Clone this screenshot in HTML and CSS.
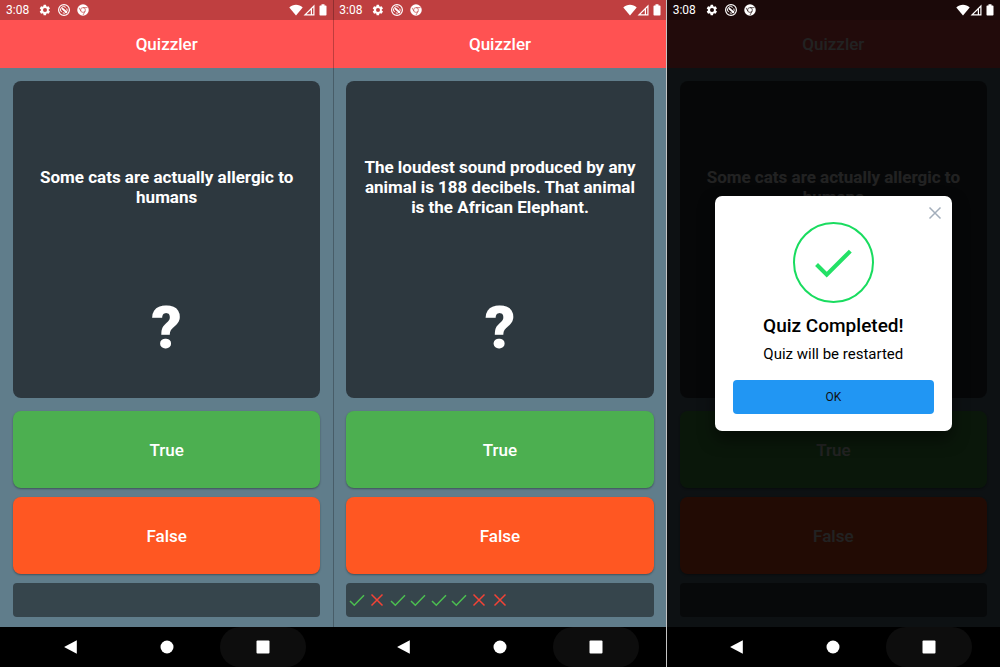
FILE: index.html
```html
<!DOCTYPE html>
<html lang="en">
<head>
<meta charset="utf-8">
<meta name="viewport" content="width=device-width, initial-scale=1">
<title>Quizzler</title>
<link rel="stylesheet" href="styles.css">
</head>
<body>
<svg class="sprite" aria-hidden="true">
  <symbol id="gear" viewBox="0 0 24 24"><path fill="currentColor" fill-rule="evenodd" d="M19.4 13a7.500 7.500 0 0 0 0-2l2.200-1.700a.5.5 0 0 0 .1-.6l-2.300-3.900a.5.5 0 0 0-.6-.2l-2.600 1a7.700 7.700 0 0 0-1.700-1L14.100 1.900a.5.5 0 0 0-.5-.4h-4a.5.5 0 0 0-.5.4l-.4 2.700a8 8 0 0 0-1.700 1l-2.600-1a.5.5 0 0 0-.6.2L1.700 8.700a.5.5 0 0 0 .1.600L4 11a8 8 0 0 0 0 2l-2.200 1.700a.5.5 0 0 0-.1.600l2.100 3.900c.1.200.4.300.6.200l2.600-1a7.700 7.700 0 0 0 1.700 1l.4 2.700c0 .2.2.4.5.4h4c.3 0 .5-.2.5-.4l.4-2.700a8 8 0 0 0 1.700-1l2.600 1c.2.1.5 0 .6-.2l2.300-3.900a.5.5 0 0 0-.1-.6zM12 16a4 4 0 1 1 0-8 4 4 0 0 1 0 8z"/></symbol>
  <symbol id="quiet" viewBox="0 0 24 24"><g fill="none" stroke="currentColor" stroke-width="2.400"><circle cx="12" cy="12" r="10.800"/><path d="M7.200 16.200A6.300 6.300 0 0 1 15.500 6.700M17.500 9A6.300 6.300 0 0 1 9.500 17.800" stroke-width="2"/><path d="M8 8.500l10 9" stroke-width="3.400"/></g></symbol>
  <symbol id="browser" viewBox="0 0 24 24"><circle cx="12" cy="12" r="11.500" fill="currentColor"/><g fill="none" stroke="var(--bar)" stroke-width="1.300"><circle cx="12" cy="12" r="4.800"/><path d="M12 7.200h9M7.800 14.400L4 7.500M16.200 14.400L12 22"/></g></symbol>
  <symbol id="wifi" viewBox="0 0 14 12"><path fill="currentColor" d="M.3 3.500C4-.1 10-.1 13.700 3.500L7 11.500z"/></symbol>
  <symbol id="signal" viewBox="0 0 12 12"><path fill="currentColor" fill-rule="evenodd" d="M11.500.5v11H.5zM7.800 6L3.500 10.300h4.300zM9 4.800v5.500h1.300V3.500z"/></symbol>
  <symbol id="battery" viewBox="0 0 8 12"><path fill="currentColor" d="M2.500.3h3v1.200h1.200q.8 0 .8.800v8.500q0 .8-.8.800H1.300q-.8 0-.8-.8V2.300q0-.8.8-.8h1.200z"/></symbol>
  <symbol id="check" viewBox="0 0 24 24"><path fill="currentColor" d="M9 16.200L4.800 12l-1.400 1.400L9 19 21 7l-1.400-1.400z"/></symbol>
  <symbol id="tick" viewBox="0 0 16 14"><path d="M1 8l4.300 4.200L15 2.300" fill="none" stroke="currentColor" stroke-width="1.500"/></symbol>
  <symbol id="cross" viewBox="0 0 16 14"><path d="M2.500 1.500l11 11M13.500 1.500l-11 11" fill="none" stroke="currentColor" stroke-width="1.500"/></symbol>
  <symbol id="back" viewBox="0 0 14 14"><path fill="currentColor" d="M12.800.3v13.400L.5 7.300q-.4-.3 0-.6z"/></symbol>
  <symbol id="home" viewBox="0 0 14 14"><circle cx="7" cy="7" r="6.500" fill="currentColor"/></symbol>
  <symbol id="recent" viewBox="0 0 14 14"><rect x=".5" y=".5" width="13" height="13" rx="1" fill="currentColor"/></symbol>
</svg>

<main class="phones">
  <section class="phone" aria-label="First question">
    <div class="status">
      <span class="time">3:08</span>
      <svg class="status-icon"><use href="#gear"/></svg>
      <svg class="status-icon"><use href="#quiet"/></svg>
      <svg class="status-icon"><use href="#browser"/></svg>
      <svg class="wifi"><use href="#wifi"/></svg>
      <svg class="signal"><use href="#signal"/></svg>
      <svg class="battery"><use href="#battery"/></svg>
    </div>
    <header class="appbar"><h1 class="title">Quizzler</h1></header>
    <div class="quiz">
      <div class="card">
        <p class="question">Some cats are actually allergic to humans</p>
        <div class="mark">?</div>
      </div>
      <button class="answer answer-true" type="button">True</button>
      <button class="answer answer-false" type="button">False</button>
      <div class="score"></div>
    </div>
    <nav class="nav">
      <button class="nav-button" type="button" aria-label="Back"><svg class="nav-icon"><use href="#back"/></svg></button>
      <button class="nav-button" type="button" aria-label="Home"><svg class="nav-icon"><use href="#home"/></svg></button>
      <button class="nav-button nav-active" type="button" aria-label="Recent apps"><svg class="nav-icon"><use href="#recent"/></svg></button>
    </nav>
  </section>

  <section class="phone divided" aria-label="Quiz in progress">
    <div class="status">
      <span class="time">3:08</span>
      <svg class="status-icon"><use href="#gear"/></svg>
      <svg class="status-icon"><use href="#quiet"/></svg>
      <svg class="status-icon"><use href="#browser"/></svg>
      <svg class="wifi"><use href="#wifi"/></svg>
      <svg class="signal"><use href="#signal"/></svg>
      <svg class="battery"><use href="#battery"/></svg>
    </div>
    <header class="appbar"><h1 class="title">Quizzler</h1></header>
    <div class="quiz">
      <div class="card">
        <p class="question">The loudest sound produced by any animal is 188 decibels. That animal is the African Elephant.</p>
        <div class="mark">?</div>
      </div>
      <button class="answer answer-true" type="button">True</button>
      <button class="answer answer-false" type="button">False</button>
      <div class="score">
        <svg class="right"><use href="#tick"/></svg>
        <svg class="wrong"><use href="#cross"/></svg>
        <svg class="right"><use href="#tick"/></svg>
        <svg class="right"><use href="#tick"/></svg>
        <svg class="right"><use href="#tick"/></svg>
        <svg class="right"><use href="#tick"/></svg>
        <svg class="wrong"><use href="#cross"/></svg>
        <svg class="wrong"><use href="#cross"/></svg>
      </div>
    </div>
    <nav class="nav">
      <button class="nav-button" type="button" aria-label="Back"><svg class="nav-icon"><use href="#back"/></svg></button>
      <button class="nav-button" type="button" aria-label="Home"><svg class="nav-icon"><use href="#home"/></svg></button>
      <button class="nav-button nav-active" type="button" aria-label="Recent apps"><svg class="nav-icon"><use href="#recent"/></svg></button>
    </nav>
  </section>

  <section class="phone dimmed" aria-label="Quiz completed">
    <div class="status">
      <span class="time">3:08</span>
      <svg class="status-icon"><use href="#gear"/></svg>
      <svg class="status-icon"><use href="#quiet"/></svg>
      <svg class="status-icon"><use href="#browser"/></svg>
      <svg class="wifi"><use href="#wifi"/></svg>
      <svg class="signal"><use href="#signal"/></svg>
      <svg class="battery"><use href="#battery"/></svg>
    </div>
    <header class="appbar"><h1 class="title">Quizzler</h1></header>
    <div class="quiz">
      <div class="card">
        <p class="question">Some cats are actually allergic to humans</p>
        <div class="mark"></div>
      </div>
      <button class="answer answer-true" type="button">True</button>
      <button class="answer answer-false" type="button">False</button>
      <div class="score"></div>
    </div>
    <nav class="nav">
      <button class="nav-button" type="button" aria-label="Back"><svg class="nav-icon"><use href="#back"/></svg></button>
      <button class="nav-button" type="button" aria-label="Home"><svg class="nav-icon"><use href="#home"/></svg></button>
      <button class="nav-button nav-active" type="button" aria-label="Recent apps"><svg class="nav-icon"><use href="#recent"/></svg></button>
    </nav>
    <div class="scrim">
      <div class="dialog" role="dialog" aria-labelledby="done-title">
        <button class="close" type="button" aria-label="Close"><svg class="close-icon" viewBox="0 0 14 14"><path d="M1.500 1.500l11 11M12.500 1.500l-11 11" fill="none" stroke="currentColor" stroke-width="1.500"/></svg></button>
        <div class="badge"><svg class="badge-icon"><use href="#check"/></svg></div>
        <h2 class="dialog-title" id="done-title">Quiz Completed!</h2>
        <p class="dialog-text">Quiz will be restarted</p>
        <button class="ok" type="button">OK</button>
      </div>
    </div>
  </section>
</main>
</body>
</html>
```
FILE: styles.css
```css
* {
  box-sizing: border-box;
}

body {
  margin: 0;
  font-family: Roboto, "Liberation Sans", sans-serif;
  background: #000;
}

h1, h2, p {
  margin: 0;
}

button {
  border: 0;
  padding: 0;
  font-family: inherit;
  cursor: pointer;
}

svg {
  display: block;
}

.sprite {
  position: absolute;
  width: 0;
  height: 0;
}

.phones {
  display: grid;
  grid-template-columns: repeat(3, 1fr);
  min-height: 100vh;
}

.phone {
  --bar: #bf3f40;
  position: relative;
  display: flex;
  flex-direction: column;
  background: #607d8b;
}

.divided::before,
.dimmed::before {
  content: "";
  position: absolute;
  top: 0;
  bottom: 0;
  left: 0;
  width: 1px;
  background: rgba(0, 0, 0, 0.25);
  z-index: 3;
}

.dimmed::before {
  left: -1px;
  background: #c4c4c4;
}

.status {
  display: flex;
  align-items: center;
  height: 20px;
  padding: 0 6px;
  background: var(--bar);
  color: #fff;
}

.time {
  width: 33px;
  font-size: 12px;
  line-height: 20px;
}

.status-icon {
  width: 12px;
  height: 12px;
  margin-right: 7px;
}

.wifi {
  width: 14px;
  height: 12px;
  margin-left: auto;
}

.signal {
  width: 12px;
  height: 12px;
  margin-right: 4px;
}

.battery {
  width: 8px;
  height: 12px;
}

.appbar {
  display: flex;
  align-items: center;
  justify-content: center;
  height: 48px;
  background: #ff5252;
}

.title {
  font-size: 17px;
  font-weight: 500;
  color: #fff;
}

.quiz {
  flex: 1;
  display: flex;
  flex-direction: column;
  padding: 13px 13px 10px;
}

.card {
  flex: 1;
  display: flex;
  flex-direction: column;
  margin-bottom: 13px;
  border-radius: 8px;
  background: #2d383f;
  color: #fff;
}

.question {
  flex: 2;
  display: grid;
  place-items: center;
  padding: 0 16px;
  font-size: 17px;
  line-height: 20px;
  font-weight: 700;
  text-align: center;
}

.mark {
  flex: 1;
  font-size: 60px;
  line-height: 72px;
  font-weight: 900;
  text-align: center;
}

.answer {
  height: 77px;
  margin-bottom: 9px;
  border-radius: 8px;
  box-shadow: 0 1px 2px rgba(0, 0, 0, 0.35);
  color: #fff;
  font-size: 17px;
  font-weight: 500;
}

.answer-true {
  background: #4caf50;
}

.answer-false {
  background: #ff5722;
}

.score {
  display: grid;
  grid-template-columns: repeat(15, 1fr);
  align-items: center;
  justify-items: center;
  height: 34px;
  border-radius: 4px;
  background: #36454c;
}

.right,
.wrong {
  width: 16px;
  height: 14px;
}

.right {
  color: #4cbf50;
}

.wrong {
  color: #f44336;
}

.nav {
  display: flex;
  justify-content: center;
  gap: 10px;
  height: 40px;
  background: #000;
}

.nav-button {
  display: grid;
  place-items: center;
  width: 86px;
  border-radius: 20px;
  background: transparent;
  color: #fff;
}

.nav-active {
  background: #0d0d0d;
}

.nav-icon {
  width: 14px;
  height: 14px;
}

.dimmed {
  --bar: #1b0909;
}

.dimmed .status,
.dimmed .nav {
  position: relative;
  z-index: 2;
}

.scrim {
  position: absolute;
  top: 0;
  right: 0;
  bottom: 40px;
  left: 0;
  display: grid;
  place-items: center;
  background: rgba(0, 0, 0, 0.865);
}

.dialog {
  position: relative;
  display: flex;
  flex-direction: column;
  align-items: center;
  width: 71%;
  padding: 26px 18px 17px;
  border-radius: 7px;
  background: #fff;
  color: #000;
  box-shadow: 0 8px 16px rgba(0, 0, 0, 0.5);
}

.close {
  position: absolute;
  top: 10px;
  right: 10px;
  background: transparent;
  color: #a3aebb;
}

.close-icon {
  width: 14px;
  height: 14px;
}

.badge {
  display: grid;
  place-items: center;
  width: 81px;
  height: 81px;
  margin-bottom: 12px;
  border: 2px solid #19dc5f;
  border-radius: 50%;
  color: #23e166;
}

.badge-icon {
  width: 50px;
  height: 50px;
}

.dialog-title {
  margin-bottom: 7px;
  font-size: 19px;
  line-height: 22px;
  font-weight: 500;
}

.dialog-text {
  margin-bottom: 16px;
  font-size: 15px;
  line-height: 20px;
}

.ok {
  width: 100%;
  height: 34px;
  border-radius: 4px;
  background: #2196f3;
  color: #111;
  font-size: 12px;
}
```
